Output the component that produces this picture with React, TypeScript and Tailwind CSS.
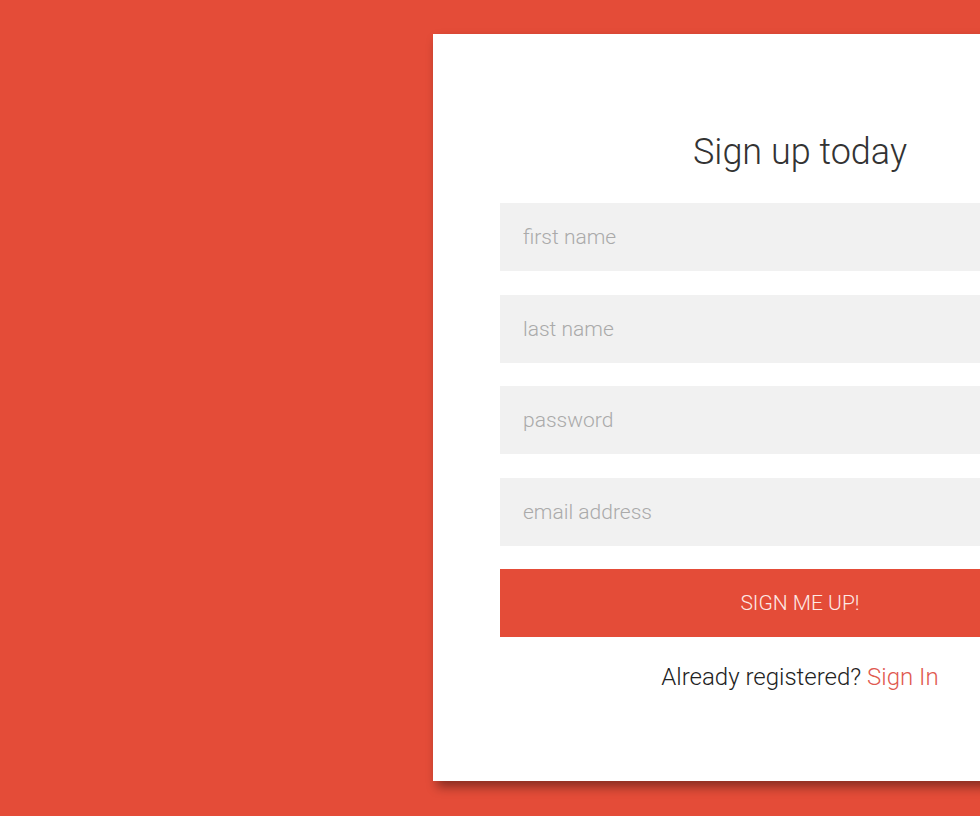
const fields = ["first name", "last name", "password", "email address"];

export default function App() {
  return (
    <div className="flex h-[816px] w-[980px] overflow-hidden bg-[#e44c38] pl-[433px] pt-[34px] font-['Roboto',sans-serif] font-light">
      <div className="h-[747px] w-[734px] shrink-0 bg-white px-[67px] pt-[100px] shadow-[4px_6px_10px_rgba(0,0,0,0.4)]">
        <h1 className="text-center text-[36px] leading-[36px] font-light text-[#333]">
          Sign up today
        </h1>
        <form className="mt-[33px] flex flex-col gap-[23.5px]">
          {fields.map((f) => (
            <input
              key={f}
              placeholder={f}
              className="h-[68px] w-full bg-[#f1f1f1] px-[23px] text-[21px] font-light text-[#333] outline-none placeholder:text-[#aaa]"
            />
          ))}
          <button
            type="button"
            className="h-[68px] w-full bg-[#e44c38] pt-[2px] text-[21px] font-light text-[#fde9e6]"
          >
            SIGN ME UP!
          </button>
        </form>
        <p className="mt-[28px] text-center text-[24px] leading-[24px] text-[#222]">
          Already registered? <a className="text-[#df5a50]">Sign In</a>
        </p>
      </div>
    </div>
  );
}
